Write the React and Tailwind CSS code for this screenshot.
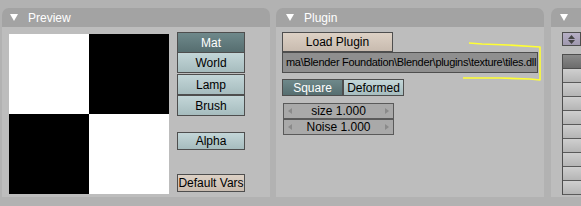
import React from "react";

const font = { fontFamily: '"Liberation Sans", Arial, sans-serif' };

const Tri = () => (
  <svg width="8" height="7" viewBox="0 0 8 7" className="shrink-0">
    <path d="M0 0h8L4 7z" fill="#ffffff" />
  </svg>
);

function Header({ title, className = "" }) {
  return (
    <div className={`h-[19px] bg-[#a3a3a3] rounded-t-[7px] flex items-center text-white text-[12px] ${className}`}>
      <Tri />
      {title && <span className="ml-[10px]">{title}</span>}
    </div>
  );
}

const btnBase = "flex items-center justify-center border border-[#4e4e4e] text-[12px] leading-none";
const teal = "bg-gradient-to-b from-[#c3d6d8] to-[#a6bcbe] text-black";
const tealOn = "bg-gradient-to-b from-[#6f898b] to-[#566e70] text-white";
const beige = "bg-gradient-to-b from-[#ddd1c5] to-[#c8bbaf] text-black";

function Slider({ label }) {
  return (
    <div className="h-[16px] flex items-center justify-between px-[4px] border border-[#5a5a5a] bg-[#a9a9a9] text-[12px] text-black">
      <svg width="4" height="6" viewBox="0 0 4 6"><path d="M4 0v6L0 3z" fill="#8a8a8a" /></svg>
      <span>{label}</span>
      <svg width="4" height="6" viewBox="0 0 4 6"><path d="M0 0v6l4-3z" fill="#8a8a8a" /></svg>
    </div>
  );
}

export default function App() {
  return (
    <div className="relative w-[581px] h-[206px] overflow-hidden bg-[#b2b2b2] flex pt-[8px] pl-[2px]" style={font}>
      {/* Preview panel */}
      <div className="w-[268px] shrink-0">
        <Header title="Preview" className="pl-[8px]" />
        <div className="h-[170px] bg-[#bdbdbd] flex items-start pl-[7px]">
          <div className="mt-[7px] grid grid-cols-2 w-[160px] h-[160px]">
            <div className="bg-white" />
            <div className="bg-black" />
            <div className="bg-black" />
            <div className="bg-white" />
          </div>
          <div className="ml-[8px] mt-[5px] w-[68px] flex flex-col">
            <div className={`${btnBase} ${tealOn} h-[21px]`}>Mat</div>
            <div className={`${btnBase} ${teal} h-[21px] -mt-px`}>World</div>
            <div className={`${btnBase} ${teal} h-[21px] mt-px`}>Lamp</div>
            <div className={`${btnBase} ${teal} h-[21px]`}>Brush</div>
            <div className={`${btnBase} ${teal} h-[18px] mt-[16px]`}>Alpha</div>
            <div className={`${btnBase} ${beige} h-[18px] mt-[24px]`}>Default Vars</div>
          </div>
        </div>
      </div>

      {/* Plugin panel */}
      <div className="w-[268px] shrink-0 ml-[6px]">
        <Header title="Plugin" className="pl-[10px]" />
        <div className="h-[170px] bg-[#bdbdbd] pl-[6px] pt-[5px] flex flex-col items-start">
          <div className={`${btnBase} ${beige} h-[20px] w-[111px]`}>Load Plugin</div>
          <div className="h-[21px] w-[256px] border border-[#4e4e4e] bg-[#8f8f8f] text-black text-[11px] flex items-center pl-[3px] whitespace-nowrap overflow-hidden tracking-[-0.3px]">
            ma\Blender Foundation\Blender\plugins\texture\tiles.dll
          </div>
          <div className="flex mt-[6px]">
            <div className={`${btnBase} ${tealOn} h-[17px] w-[61px]`}>Square</div>
            <div className={`${btnBase} ${teal} h-[17px] w-[61px]`}>Deformed</div>
          </div>
          <div className="mt-[7px] w-[111px] ml-px flex flex-col">
            <Slider label="size 1.000" />
            <Slider label="Noise 1.000" />
          </div>
        </div>
      </div>

      {/* Third panel (cut off) */}
      <div className="w-[40px] shrink-0 ml-[7px]">
        <Header className="pl-[9px]" />
        <div className="h-[170px] bg-[#bdbdbd] pl-[11px] pt-[5px] flex flex-col">
          <div className="h-[14px] w-[19px] border border-[#4e4e4e] bg-gradient-to-b from-[#b7b0c6] to-[#9f98ae] flex items-center justify-center">
            <svg width="7" height="9" viewBox="0 0 7 9"><path d="M0 4L3.5 0L7 4zM0 5h7L3.5 9z" fill="#444" /></svg>
          </div>
          <div className="mt-[8px] border-l border-t border-[#4e4e4e] flex flex-col">
            <div className="h-[14px] bg-gradient-to-b from-[#8a8a8a] to-[#6c6c6c] border-b border-[#4e4e4e]" />
            {Array.from({ length: 9 }).map((_, i) => (
              <div key={i} className="h-[14px] bg-gradient-to-b from-[#cfcfcf] to-[#b5b5b5] border-b border-[#5a5a5a]" />
            ))}
          </div>
        </div>
      </div>

      {/* yellow annotation */}
      <svg className="absolute inset-0 pointer-events-none" width="581" height="206">
        <path
          d="M469 43 L482 44 L508 45 L540 47 L540 80 L530 79 L500 78 L463 78"
          fill="none"
          stroke="#ffff33"
          strokeWidth="1.6"
          strokeLinejoin="round"
        />
      </svg>
    </div>
  );
}
